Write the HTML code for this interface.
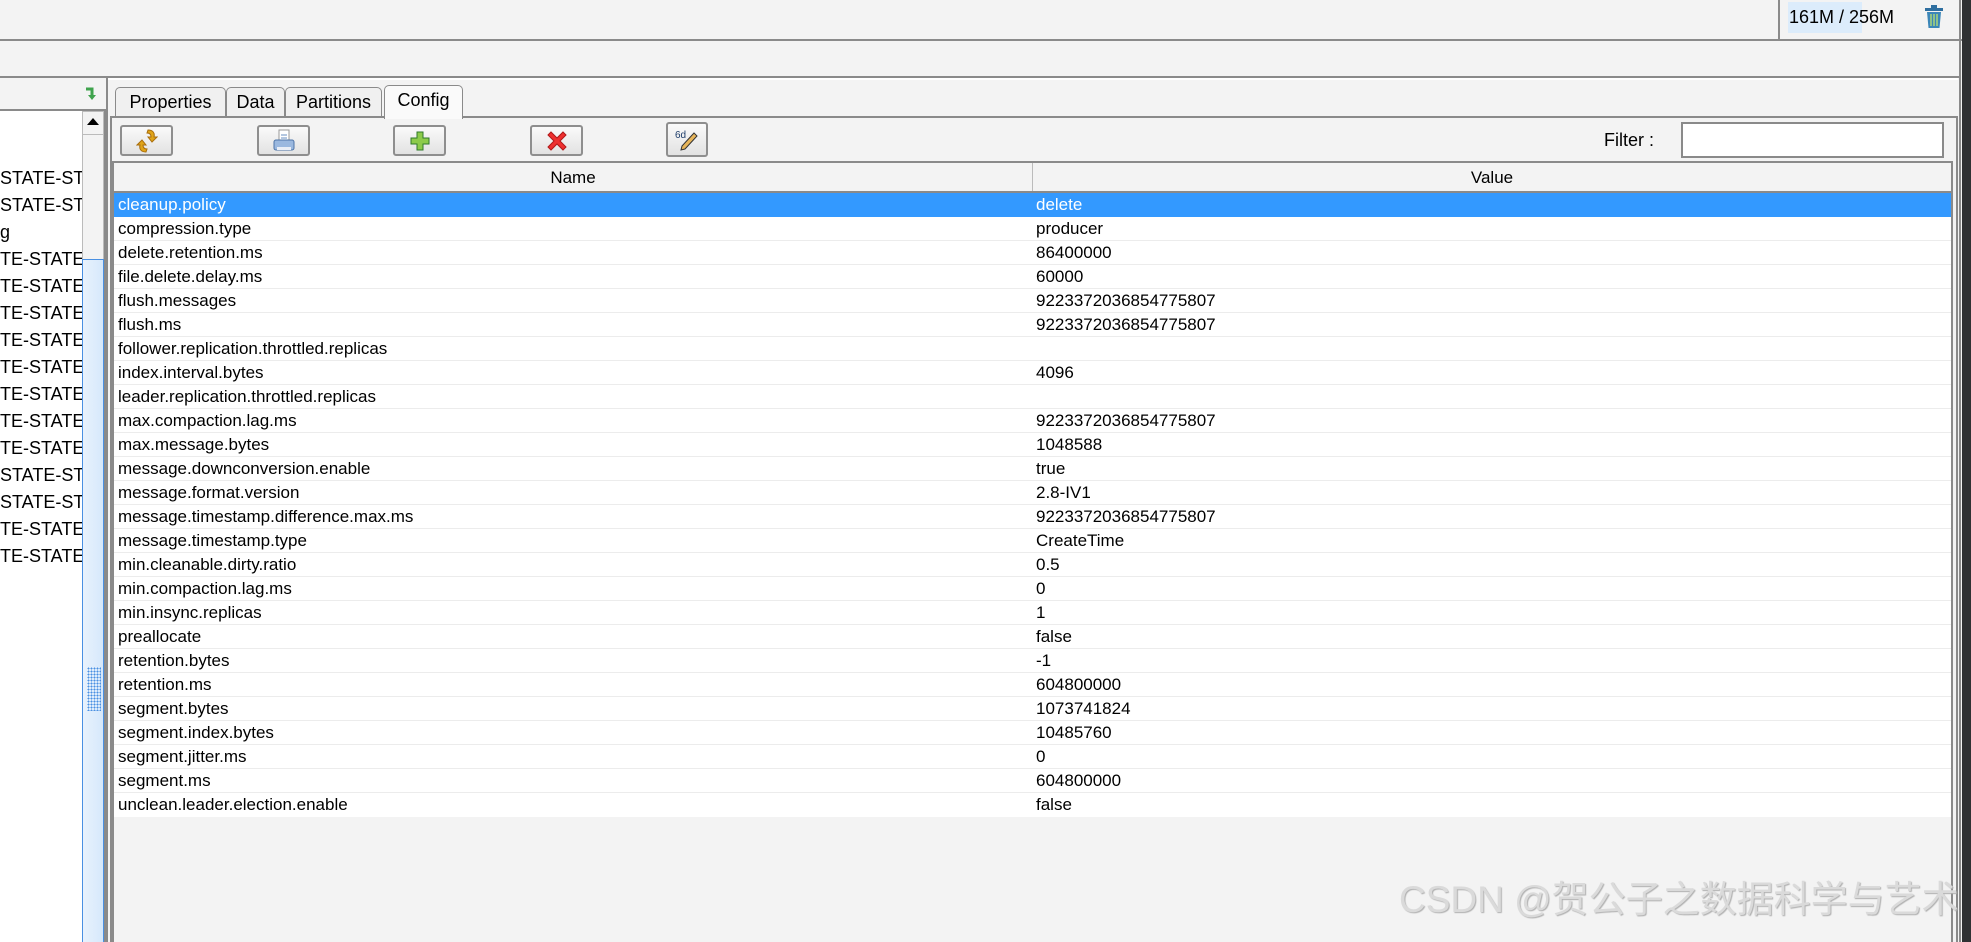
<!DOCTYPE html>
<html><head><meta charset="utf-8">
<style>
*{margin:0;padding:0;box-sizing:border-box}
html,body{width:1971px;height:942px;overflow:hidden;background:#f3f3f3;font-family:"Liberation Sans","Noto Sans CJK SC",sans-serif;color:#000}
.abs{position:absolute}
.row{position:absolute;left:0;right:0;height:24px;border-bottom:1px solid #ececec;background:#fff;font-size:17px;line-height:23px;white-space:nowrap}
.row .n{position:absolute;left:4px}
.row .v{position:absolute;left:922px}
.row.sel{background:#3399ff;color:#fff;border-bottom-color:#3399ff}
.tree div{position:absolute;left:0;font-size:18px;line-height:27px;white-space:nowrap}
.btn{position:absolute;top:125px;height:31px;border:2px solid #8e8e8e;border-radius:3px;background:linear-gradient(#fafafa,#e2e2e2);display:flex;align-items:center;justify-content:center}
.tab{position:absolute;top:87px;height:30px;border:1px solid #8a8a8a;border-bottom:none;border-radius:5px 5px 0 0;font-size:18px;line-height:29px;text-align:center;background:#f0f0f0}
</style></head><body>
<div class="abs" style="left:0;top:0;width:1962px;height:41px;background:#f3f3f3;border-bottom:2px solid #8a8a8a"></div>
<div class="abs" style="left:1778px;top:0;width:2px;height:40px;background:#8a8a8a"></div>
<div class="abs" style="left:1788px;top:2px;width:74px;height:31px;background:#dcecfb"></div>
<div class="abs" style="left:1789px;top:4px;font-size:18px;line-height:27px">161M / 256M</div>
<svg class="abs" style="left:1924px;top:5px" width="20" height="24" viewBox="0 0 20 24"><rect x="1" y="3" width="18" height="3" fill="#2f6fa0"/><rect x="7" y="0" width="6" height="3" fill="#2f6fa0"/><path d="M3 7h14l-1.5 16h-11z" fill="#3b86b8"/><path d="M7 9v12M10 9v12M13 9v12" stroke="#a9d57a" stroke-width="1.5"/></svg>
<div class="abs" style="left:1959px;top:0;width:2px;height:942px;background:#8a8a8a"></div>
<div class="abs" style="left:1962px;top:0;width:9px;height:942px;background:#2f3133"></div>
<div class="abs" style="left:0;top:76px;width:1960px;height:2px;background:#8a8a8a"></div>
<div class="abs" style="left:0;top:110px;width:82px;height:832px;background:#fff;overflow:hidden" >
 <div class="tree">
  <div style="top:55px">STATE-STO</div>
  <div style="top:82px">STATE-STO</div>
  <div style="top:109px">g</div>
  <div style="top:136px">TE-STATE-</div>
  <div style="top:163px">TE-STATE-</div>
  <div style="top:190px">TE-STATE-</div>
  <div style="top:217px">TE-STATE-</div>
  <div style="top:244px">TE-STATE-</div>
  <div style="top:271px">TE-STATE-</div>
  <div style="top:298px">TE-STATE-</div>
  <div style="top:325px">TE-STATE-</div>
  <div style="top:352px">STATE-STO</div>
  <div style="top:379px">STATE-STO</div>
  <div style="top:406px">TE-STATE-</div>
  <div style="top:433px">TE-STATE-</div>
 </div>
</div>
<div class="abs" style="left:0;top:109px;width:106px;height:2px;background:#8a8a8a"></div>
<div class="abs" style="left:82px;top:111px;width:22px;height:831px;background:#f3f3f3;border-left:1px solid #bbb;border-right:1px solid #bbb"></div>
<div class="abs" style="left:82px;top:111px;width:22px;height:24px;background:#f3f3f3;border:1px solid #bbb"></div>
<div class="abs" style="left:87px;top:118px;width:0;height:0;border-left:6px solid transparent;border-right:6px solid transparent;border-bottom:7px solid #000"></div>
<div class="abs" style="left:82px;top:259px;width:22px;height:683px;background:linear-gradient(90deg,#e8f2fd,#d6e8fb);border:1px solid #4a90e2;border-bottom:none"></div>
<div class="abs" style="left:87px;top:667px;width:14px;height:44px;background-image:radial-gradient(#4a90e2 40%,transparent 45%);background-size:3px 3px"></div>
<div class="abs" style="left:104px;top:110px;width:2px;height:832px;background:#8a8a8a"></div>
<div class="abs" style="left:106px;top:78px;width:2px;height:864px;background:#8a8a8a"></div>
<svg class="abs" style="left:84px;top:86px" width="16" height="16" viewBox="0 0 16 16"><path d="M2 3h6v7" fill="none" stroke="#3fa34d" stroke-width="3"/><path d="M4 9h8l-4 5z" fill="#3fa34d"/></svg>
<div class="abs" style="left:108px;top:78px;width:1850px;height:2px;background:#fff"></div>
<div class="tab" style="left:115px;width:111px">Properties</div>
<div class="tab" style="left:226px;width:59px">Data</div>
<div class="tab" style="left:285px;width:97px">Partitions</div>
<div class="tab" style="left:384px;width:79px;top:85px;height:34px;background:#fafafa;z-index:2">Config</div>
<div class="abs" style="left:110px;top:116px;width:1848px;height:826px;border:2px solid #8a8a8a;border-bottom:none;background:#f3f3f3"></div>
<div class="btn" style="left:120px;width:53px"><svg width="22" height="26" viewBox="0 0 22 26"><path d="M12 2c5 0 7 3 6 7l3 0-5 5-4-5h3c0-2-1-4-4-4z" fill="#e0a418" stroke="#a86d0c" stroke-width="1"/><path d="M10 24c-5 0-7-3-6-7H1l5-5 4 5H7c0 2 1 4 4 4z" fill="#e0a418" stroke="#a86d0c" stroke-width="1"/></svg></div>
<div class="btn" style="left:257px;width:53px"><svg width="26" height="26" viewBox="0 0 26 26"><rect x="8" y="2" width="10" height="12" fill="#fff" stroke="#999"/><path d="M10 7h6M10 10h6" stroke="#6a8fc0"/><rect x="3" y="12" width="20" height="10" rx="2" fill="#9ab8df" stroke="#4d74a8"/><rect x="6" y="19" width="14" height="3" fill="#e9eef6"/></svg></div>
<div class="btn" style="left:393px;width:53px"><svg width="20" height="20" viewBox="0 0 20 20"><path d="M7 1h6v6h6v6h-6v6H7v-6H1V7h6z" fill="#8ccb4a" stroke="#2f7a2a"/></svg></div>
<div class="btn" style="left:530px;width:53px"><svg width="22" height="22" viewBox="0 0 22 22"><path d="M2 5l3-3 6 6 6-6 3 3-6 6 6 6-3 3-6-6-6 6-3-3 6-6z" fill="#ee3030" stroke="#b01818"/></svg></div>
<div class="btn" style="left:666px;width:42px;top:122px;height:35px"><svg width="26" height="26" viewBox="0 0 26 26"><text x="1" y="11" font-size="10" font-family="Liberation Sans" fill="#1e3d6a">6d</text><path d="M20 6l3 3-12 13-4 1 1-4z" fill="#e7b55a" stroke="#333"/></svg></div>
<div class="abs" style="left:1604px;top:128px;font-size:18px;line-height:24px">Filter :</div>
<div class="abs" style="left:1681px;top:122px;width:263px;height:36px;background:#fff;border:2px solid #8a8a8a"></div>
<div class="abs" style="left:112px;top:161px;width:1841px;height:781px;border:2px solid #8a8a8a;border-bottom:none;background:#f3f3f3"></div>
<div class="abs" style="left:114px;top:163px;width:1837px;height:30px;background:#f3f3f3;border-bottom:2px solid #8a8a8a;font-size:17px;line-height:30px">
 <div class="abs" style="left:0;width:918px;text-align:center">Name</div>
 <div class="abs" style="left:918px;top:0;width:1px;height:28px;background:#bbb"></div>
 <div class="abs" style="left:919px;width:918px;text-align:center">Value</div>
</div>
<div class="abs" style="left:114px;top:193px;width:1837px;height:624px">
<div class="row sel" style="top:0"><span class="n">cleanup.policy</span><span class="v">delete</span></div>
<div class="row" style="top:24px"><span class="n">compression.type</span><span class="v">producer</span></div>
<div class="row" style="top:48px"><span class="n">delete.retention.ms</span><span class="v">86400000</span></div>
<div class="row" style="top:72px"><span class="n">file.delete.delay.ms</span><span class="v">60000</span></div>
<div class="row" style="top:96px"><span class="n">flush.messages</span><span class="v">9223372036854775807</span></div>
<div class="row" style="top:120px"><span class="n">flush.ms</span><span class="v">9223372036854775807</span></div>
<div class="row" style="top:144px"><span class="n">follower.replication.throttled.replicas</span><span class="v"></span></div>
<div class="row" style="top:168px"><span class="n">index.interval.bytes</span><span class="v">4096</span></div>
<div class="row" style="top:192px"><span class="n">leader.replication.throttled.replicas</span><span class="v"></span></div>
<div class="row" style="top:216px"><span class="n">max.compaction.lag.ms</span><span class="v">9223372036854775807</span></div>
<div class="row" style="top:240px"><span class="n">max.message.bytes</span><span class="v">1048588</span></div>
<div class="row" style="top:264px"><span class="n">message.downconversion.enable</span><span class="v">true</span></div>
<div class="row" style="top:288px"><span class="n">message.format.version</span><span class="v">2.8-IV1</span></div>
<div class="row" style="top:312px"><span class="n">message.timestamp.difference.max.ms</span><span class="v">9223372036854775807</span></div>
<div class="row" style="top:336px"><span class="n">message.timestamp.type</span><span class="v">CreateTime</span></div>
<div class="row" style="top:360px"><span class="n">min.cleanable.dirty.ratio</span><span class="v">0.5</span></div>
<div class="row" style="top:384px"><span class="n">min.compaction.lag.ms</span><span class="v">0</span></div>
<div class="row" style="top:408px"><span class="n">min.insync.replicas</span><span class="v">1</span></div>
<div class="row" style="top:432px"><span class="n">preallocate</span><span class="v">false</span></div>
<div class="row" style="top:456px"><span class="n">retention.bytes</span><span class="v">-1</span></div>
<div class="row" style="top:480px"><span class="n">retention.ms</span><span class="v">604800000</span></div>
<div class="row" style="top:504px"><span class="n">segment.bytes</span><span class="v">1073741824</span></div>
<div class="row" style="top:528px"><span class="n">segment.index.bytes</span><span class="v">10485760</span></div>
<div class="row" style="top:552px"><span class="n">segment.jitter.ms</span><span class="v">0</span></div>
<div class="row" style="top:576px"><span class="n">segment.ms</span><span class="v">604800000</span></div>
<div class="row" style="top:600px;border-bottom:none"><span class="n">unclean.leader.election.enable</span><span class="v">false</span></div>
</div>
<div class="abs" style="left:1399px;top:878px;font-size:37px;line-height:44px;font-weight:normal;color:#dadada;text-shadow:1px 1px 1px #b0b0b0;white-space:nowrap">CSDN @贺公子之数据科学与艺术</div>
</body></html>
